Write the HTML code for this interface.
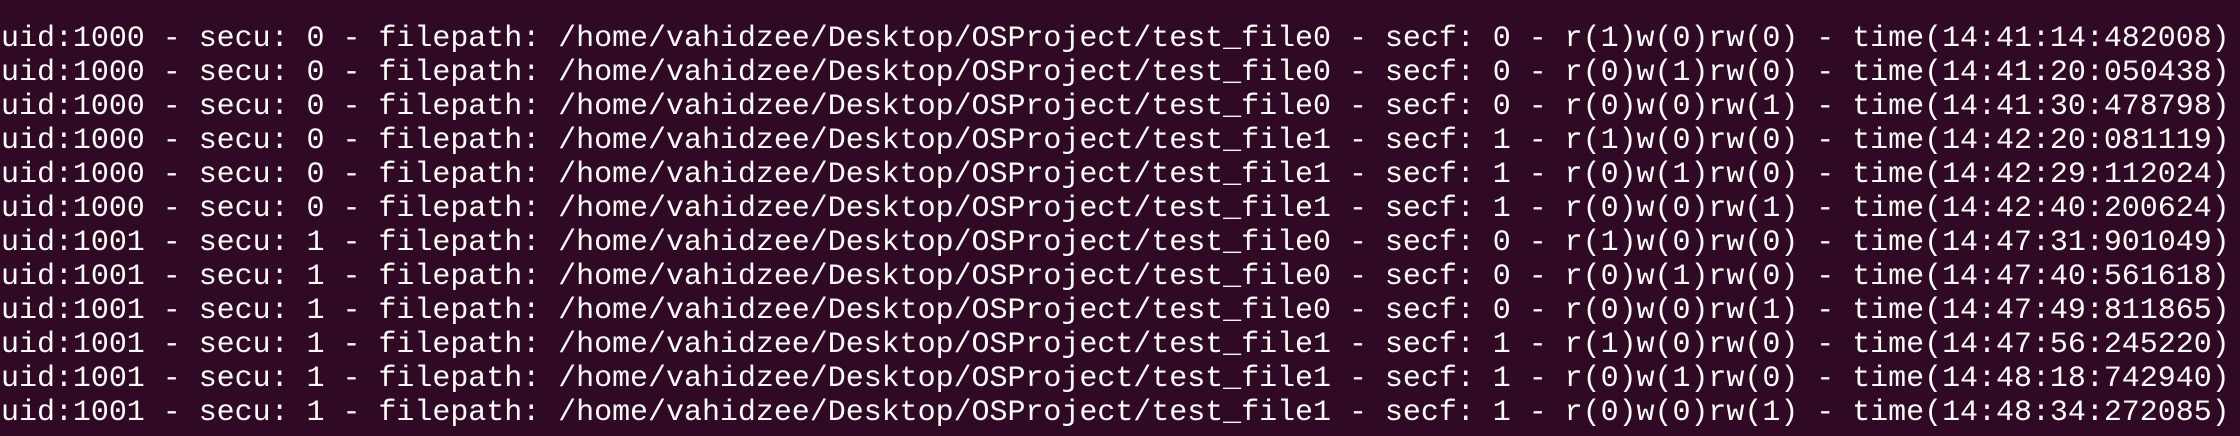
<!DOCTYPE html>
<html><head><style>
html,body{margin:0;padding:0;background:#300a24;width:2240px;height:436px;overflow:hidden}
pre{margin:0;padding:22px 0 0 1px;font-family:"Liberation Mono","DejaVu Sans Mono",monospace;font-size:30px;line-height:34px;color:#fbfbf8;letter-spacing:-0.03px}
</style></head><body><pre>uid:1000 - secu: 0 - filepath: /home/vahidzee/Desktop/OSProject/test_file0 - secf: 0 - r(1)w(0)rw(0) - time(14:41:14:482008)
uid:1000 - secu: 0 - filepath: /home/vahidzee/Desktop/OSProject/test_file0 - secf: 0 - r(0)w(1)rw(0) - time(14:41:20:050438)
uid:1000 - secu: 0 - filepath: /home/vahidzee/Desktop/OSProject/test_file0 - secf: 0 - r(0)w(0)rw(1) - time(14:41:30:478798)
uid:1000 - secu: 0 - filepath: /home/vahidzee/Desktop/OSProject/test_file1 - secf: 1 - r(1)w(0)rw(0) - time(14:42:20:081119)
uid:1000 - secu: 0 - filepath: /home/vahidzee/Desktop/OSProject/test_file1 - secf: 1 - r(0)w(1)rw(0) - time(14:42:29:112024)
uid:1000 - secu: 0 - filepath: /home/vahidzee/Desktop/OSProject/test_file1 - secf: 1 - r(0)w(0)rw(1) - time(14:42:40:200624)
uid:1001 - secu: 1 - filepath: /home/vahidzee/Desktop/OSProject/test_file0 - secf: 0 - r(1)w(0)rw(0) - time(14:47:31:901049)
uid:1001 - secu: 1 - filepath: /home/vahidzee/Desktop/OSProject/test_file0 - secf: 0 - r(0)w(1)rw(0) - time(14:47:40:561618)
uid:1001 - secu: 1 - filepath: /home/vahidzee/Desktop/OSProject/test_file0 - secf: 0 - r(0)w(0)rw(1) - time(14:47:49:811865)
uid:1001 - secu: 1 - filepath: /home/vahidzee/Desktop/OSProject/test_file1 - secf: 1 - r(1)w(0)rw(0) - time(14:47:56:245220)
uid:1001 - secu: 1 - filepath: /home/vahidzee/Desktop/OSProject/test_file1 - secf: 1 - r(0)w(1)rw(0) - time(14:48:18:742940)
uid:1001 - secu: 1 - filepath: /home/vahidzee/Desktop/OSProject/test_file1 - secf: 1 - r(0)w(0)rw(1) - time(14:48:34:272085)</pre></body></html>
